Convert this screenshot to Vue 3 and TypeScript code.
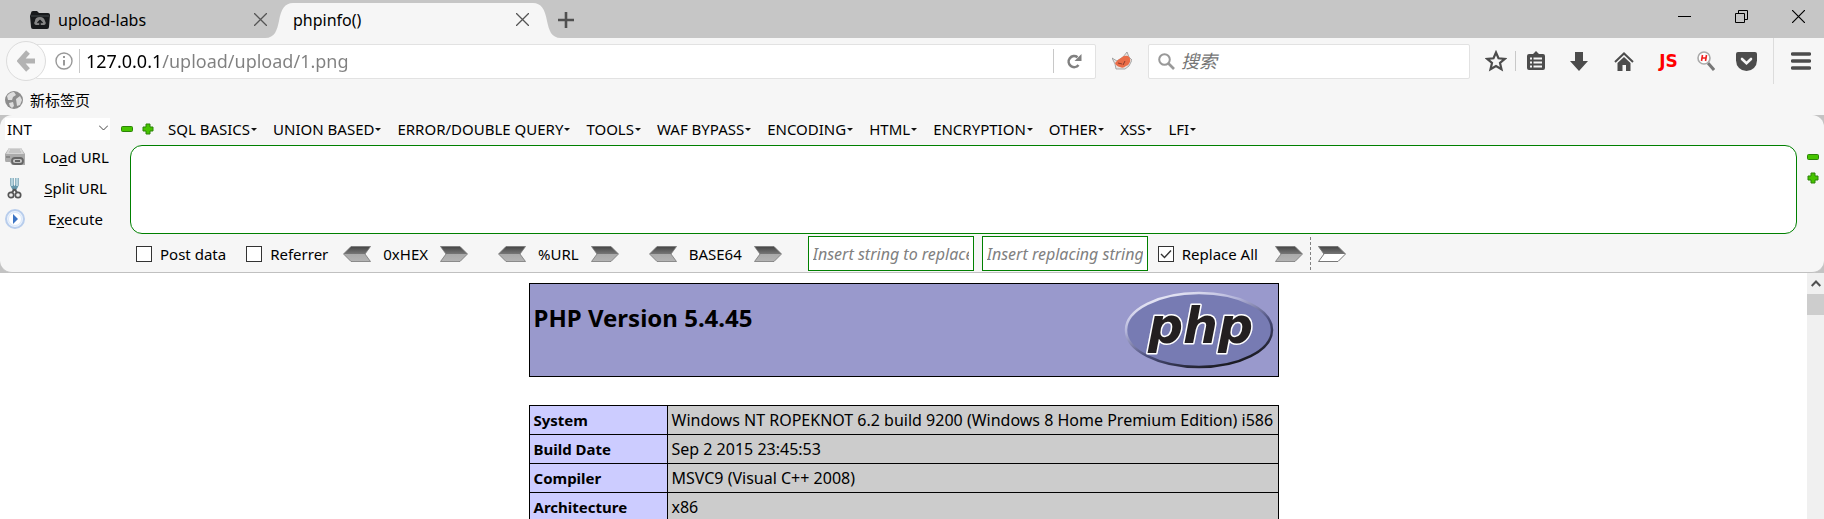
<script setup lang="ts">
import { ref } from 'vue'

const address = ref('127.0.0.1/upload/upload/1.png')
const query = ref('')
const kind = ref('INT')
const payload = ref('')
const postData = ref(false)
const referrer = ref(false)
const replaceAll = ref(true)
const needle = ref('')
const replacement = ref('')

const menus: string[] = [
  'SQL BASICS', 'UNION BASED', 'ERROR/DOUBLE QUERY', 'TOOLS', 'WAF BYPASS',
  'ENCODING', 'HTML', 'ENCRYPTION', 'OTHER', 'XSS', 'LFI',
]
const converters: string[] = ['0xHEX', '%URL', 'BASE64']
const rows: { name: string; value: string }[] = [
  { name: 'System', value: 'Windows NT ROPEKNOT 6.2 build 9200 (Windows 8 Home Premium Edition) i586' },
  { name: 'Build Date', value: 'Sep 2 2015 23:45:53' },
  { name: 'Compiler', value: 'MSVC9 (Visual C++ 2008)' },
  { name: 'Architecture', value: 'x86' },
]
</script>

<template>
  <div class="window">
    <svg class="defs" width="0" height="0" aria-hidden="true">
      <defs>
        <linearGradient id="steel" x1="0" y1="0" x2="0" y2="1">
          <stop offset="0" stop-color="#444" /><stop offset=".5" stop-color="#777" />
          <stop offset=".52" stop-color="#aaa" /><stop offset="1" stop-color="#b4b4b4" />
        </linearGradient>
        <linearGradient id="steelOpen" x1="0" y1="0" x2="0" y2="1">
          <stop offset="0" stop-color="#444" /><stop offset=".5" stop-color="#777" />
          <stop offset=".52" stop-color="#fff" /><stop offset="1" stop-color="#fff" />
        </linearGradient>
      </defs>
    </svg>

    <header class="tabs">
      <div class="tab idle">
        <svg width="20" height="18" viewBox="0 0 20 18"><path d="M1 2Q1 0 3 0H7L9 2H18Q20 2 20 4L19 16Q19 18 17 18H3Q1 18 1 16L0 5Z" fill="#17191b" /><path d="M1 5H19" stroke="#454a4d" /><path d="M6 14Q3 13 5 10Q5 6 10 6Q14 6 15 10Q17 13 14 14Z" fill="#858585" /><path d="M10 16V10M7.500 12L10 9.500L12.500 12" stroke="#17191b" stroke-width="1.500" fill="none" /></svg>
        <button class="tab-name">upload-labs</button>
        <button class="plain close" aria-label="Close upload-labs"><svg width="13" height="13" viewBox="0 0 13 13"><path d="M0 0L13 13M13 0L0 13" stroke="#555" stroke-width="1.300" /></svg></button>
      </div>
      <svg class="curve" width="28" height="35" viewBox="0 0 28 35"><path d="M0 35C10 35 12 27 14 18C16 6 20 0 28 0V35Z" fill="#f6f6f6" /></svg>
      <div class="tab active">
        <button class="tab-name">phpinfo()</button>
        <button class="plain close" aria-label="Close phpinfo()"><svg width="13" height="13" viewBox="0 0 13 13"><path d="M0 0L13 13M13 0L0 13" stroke="#555" stroke-width="1.300" /></svg></button>
      </div>
      <svg class="curve" width="28" height="35" viewBox="0 0 28 35"><path d="M28 35C18 35 16 27 14 18C12 6 8 0 0 0V35Z" fill="#f6f6f6" /></svg>
      <button class="plain new-tab" aria-label="New tab"><svg width="16" height="16" viewBox="0 0 16 16"><path d="M8 0V16M0 8H16" stroke="#505050" stroke-width="2.600" /></svg></button>
      <div class="sys">
        <button class="plain" aria-label="Minimize"><svg width="13" height="13" viewBox="0 0 13 13"><path d="M0 6.500H13" stroke="#000" /></svg></button>
        <button class="plain" aria-label="Restore"><svg width="13" height="13" viewBox="0 0 13 13"><path d="M.5 3.500H9.500V12.500H.5ZM3.500 3.500V.5H12.500V9.500H9.500" stroke="#000" fill="none" /></svg></button>
        <button class="plain" aria-label="Close window"><svg width="13" height="13" viewBox="0 0 13 13"><path d="M0 0L13 13M13 0L0 13" stroke="#000" stroke-width="1.200" /></svg></button>
      </div>
    </header>

    <nav class="toolbar">
      <button class="plain back" aria-label="Back"><svg width="18" height="22" viewBox="0 0 18 22"><path d="M11 2L3 11L11 20M3 11H18" fill="none" stroke="#b3b3b3" stroke-width="5" /></svg></button>
      <div class="address">
        <svg width="18" height="18" viewBox="0 0 18 18"><circle cx="9" cy="9" r="8" fill="none" stroke="#999" stroke-width="1.400" /><path d="M9 8V13.500M9 4V6" stroke="#999" stroke-width="2" /></svg>
        <i class="rule"></i>
        <input v-model="address" class="url" type="text" aria-label="Address" />
        <i class="rule"></i>
        <button class="plain reload" aria-label="Reload"><svg width="15" height="15" viewBox="0 0 15 15"><path d="M11.500 11A5.500 5.500 0 1 1 10.500 3.200" fill="none" stroke="#808080" stroke-width="2.600" /><path d="M14.500 0V7H7.500Z" fill="#808080" /></svg></button>
      </div>
      <button class="plain fox" aria-label="Fox"><svg width="20" height="18" viewBox="0 0 20 18"><path d="M0 6L5 9L11 5L15 0L17 5L20 8L17 14L13 17H4L3 12Z" fill="#e8e4e2" stroke="#888" stroke-width=".7" /><path d="M3 11Q5 8 9 6Q12 3 16 4Q19 6 18 10Q17 13 14 14Q11 17 8 15Q4 14 3 11Z" fill="#ea6d48" /><path d="M6 11L10 12M13 9L11 13" stroke="#8b3d2d" /></svg></button>
      <div class="search">
        <svg width="17" height="17" viewBox="0 0 17 17"><circle cx="6.500" cy="6.500" r="5.300" fill="none" stroke="#999" stroke-width="2" /><path d="M10.500 10.500L16 16" stroke="#999" stroke-width="2.600" /></svg>
        <input v-model="query" type="text" placeholder="搜索" aria-label="搜索" />
      </div>
      <div class="tools">
        <button class="plain w-star" aria-label="Bookmark"><svg width="22" height="22" viewBox="0 0 22 22"><path d="M11 2.500L13.500 8.300L19.800 8.900L15 13L16.500 19.300L11 16L5.500 19.300L7 13L2.200 8.900L8.500 8.300Z" fill="none" stroke="#4c4c4c" stroke-width="2.200" /></svg></button>
        <i class="rule short"></i>
        <button class="plain w-list" aria-label="Bookmarks list"><svg width="18" height="20" viewBox="0 0 18 20"><path d="M6 3L9 0L12 3H16Q18 3 18 5V17Q18 19 16 19H2Q0 19 0 17V5Q0 3 2 3Z" fill="#4c4c4c" /><path d="M3 7.500H5M6.500 7.500H15M3 11.500H5M6.500 11.500H15M3 15.500H5M6.500 15.500H15" stroke="#f6f6f6" stroke-width="2" /></svg></button>
        <button class="plain w-tool" aria-label="Downloads"><svg width="18" height="19" viewBox="0 0 18 19"><path d="M5 0H13V9H18L9 19L0 9H5Z" fill="#4c4c4c" /></svg></button>
        <button class="plain w-tool" aria-label="Home"><svg width="20" height="19" viewBox="0 0 20 19"><path d="M1 10L10 1.500L19 10" fill="none" stroke="#4c4c4c" stroke-width="2" /><path d="M3.500 11L10 5L16.500 11V19H12V13H8.500V19H3.500Z" fill="#4c4c4c" /></svg></button>
        <button class="plain w-tool js" aria-label="Toggle script">JS</button>
        <button class="plain w-find" aria-label="HackSearch"><svg width="18" height="20" viewBox="0 0 18 20"><path d="M11 12L17 19" stroke="#777" stroke-width="3" /><circle cx="7" cy="7" r="6" fill="#fff" stroke="#aaa" stroke-width="1.600" /><path d="M5.500 4L4.500 10M9.500 4L8.500 10M5 7H9" stroke="#f02020" stroke-width="1.600" /></svg></button>
        <button class="plain w-pocket" aria-label="Pocket"><svg width="21" height="19" viewBox="0 0 21 19"><path d="M2 0H19Q21 0 21 2V8.500A10.500 10.500 0 0 1 0 8.500V2Q0 0 2 0Z" fill="#4c4c4c" /><path d="M6 7L10.500 11.200L15 7" fill="none" stroke="#f6f6f6" stroke-width="2.600" stroke-linecap="round" /></svg></button>
        <i class="rule tall"></i>
        <button class="plain w-menu" aria-label="Menu"><svg width="20" height="18" viewBox="0 0 20 18"><path d="M1.500 2H18.500M1.500 9H18.500M1.500 16H18.500" stroke="#4c4c4c" stroke-width="3.400" stroke-linecap="round" /></svg></button>
      </div>
    </nav>

    <div class="bookmarks">
      <a href="#"><svg width="18" height="18" viewBox="0 0 18 18"><circle cx="9" cy="9" r="9" fill="#8d8d8d" /><path d="M2 5Q5 1 9 1L11 4L8 6L7 9L3 9ZM11 8L15 5L17 9L15 14L12 15ZM4 12L8 11L9 15L7 17Q4 15 4 12Z" fill="#ddd" /></svg><span>新标签页</span></a>
    </div>

    <div class="bar-back">
      <section class="hackbar">
        <div class="menus">
          <div class="pick">
            <select v-model="kind" aria-label="Injection type"><option>INT</option></select>
            <svg width="9" height="6" viewBox="0 0 9 6"><path d="M0 .5L4.500 5L9 .5" fill="none" stroke="#444" /></svg>
          </div>
          <button class="plain step" aria-label="Decrease"><svg width="12" height="12" viewBox="0 0 12 12"><rect x=".5" y="3.500" width="11" height="5" rx="1" fill="#46c400" stroke="#2c8308" /></svg></button>
          <button class="plain step" aria-label="Increase"><svg width="12" height="12" viewBox="0 0 12 12"><path d="M4 1H8V4H11V8H8V11H4V8H1V4H4Z" fill="#46c400" stroke="#2c8308" stroke-linejoin="round" /></svg></button>
          <div class="menu-list">
            <button v-for="m in menus" :key="m" class="plain menu">{{ m }}<svg width="6" height="3" viewBox="0 0 6 3"><path d="M0 0H6L3 3Z" fill="#111" /></svg></button>
          </div>
        </div>
        <div class="work">
          <div class="actions">
            <button class="plain"><svg width="20" height="20" viewBox="0 0 20 20"><path d="M4 1H16L20 7V18H7L5 15H1Q0 15 0 13V7Z" fill="#aaa" /><path d="M4 1H16L19 7H1Z" fill="#d6d6d6" /><path d="M5 3H15M4 5H16" stroke="#b4b4b4" /><path d="M1 10H5" stroke="#888" stroke-width="2" /><rect x="7" y="11" width="11" height="6" rx="3" fill="#c4c4c4" stroke="#666" stroke-width="1.800" /><path d="M10 14H15" stroke="#444" stroke-width="1.500" /></svg><span>Lo<u>a</u>d URL</span></button>
            <button class="plain"><svg width="20" height="22" viewBox="0 0 20 22"><path d="M7 1V8L9.500 13M12 1V8L9.500 13" fill="none" stroke="#6798ac" stroke-width="3.400" /><path d="M7 1V9M12 1V9" stroke="#d7edf4" stroke-width="1.400" /><path d="M9.500 12L6 17M9.500 12L13 17" stroke="#555" stroke-width="2" /><circle cx="6" cy="18" r="2.700" fill="#eee" stroke="#555" stroke-width="1.700" /><circle cx="13" cy="18" r="2.700" fill="#eee" stroke="#555" stroke-width="1.700" /></svg><span><u>S</u>plit URL</span></button>
            <button class="plain"><svg width="20" height="20" viewBox="0 0 20 20"><circle cx="10" cy="10" r="9" fill="#e9f1fc" stroke="#b8cdec" stroke-width="2" /><circle cx="10" cy="10" r="6.500" fill="#fff" stroke="#dce8f8" /><path d="M8 5L13 10L8 15Z" fill="#3c74c4" /></svg><span>E<u>x</u>ecute</span></button>
          </div>
          <div class="main">
            <textarea v-model="payload" aria-label="URL to edit"></textarea>
            <div class="options">
              <div class="checks">
                <label class="check"><input v-model="postData" type="checkbox" />Post data</label>
                <label class="check"><input v-model="referrer" type="checkbox" />Referrer</label>
              </div>
              <div v-for="c in converters" :key="c" class="convert">
                <button class="plain" :aria-label="'Decode ' + c"><svg width="28" height="16" viewBox="0 0 28 16"><path d="M8 .5H27.500L22 8L27.500 15.500H8L.5 8Z" fill="url(#steel)" stroke="#777" stroke-width=".8" /></svg></button>
                <span>{{ c }}</span>
                <button class="plain" :aria-label="'Encode ' + c"><svg width="28" height="16" viewBox="0 0 28 16"><path d="M20 .5H.5L6 8L.5 15.500H20L27.500 8Z" fill="url(#steel)" stroke="#777" stroke-width=".8" /></svg></button>
              </div>
              <div class="replace">
                <input v-model="needle" type="text" placeholder="Insert string to replace" aria-label="String to replace" />
                <input v-model="replacement" type="text" placeholder="Insert replacing string" aria-label="Replacing string" />
              </div>
              <label class="check all"><input v-model="replaceAll" type="checkbox" />Replace All</label>
              <div class="run">
                <button class="plain" aria-label="Replace"><svg width="28" height="16" viewBox="0 0 28 16"><path d="M20 .5H.5L6 8L.5 15.500H20L27.500 8Z" fill="url(#steel)" stroke="#777" stroke-width=".8" /></svg></button>
                <i class="dash"></i>
                <button class="plain" aria-label="Replace and run"><svg width="28" height="16" viewBox="0 0 28 16"><path d="M20 .5H.5L6 8L.5 15.500H20L27.500 8Z" fill="url(#steelOpen)" stroke="#777" /></svg></button>
              </div>
            </div>
          </div>
          <div class="sizer">
            <button class="plain step" aria-label="Shrink field"><svg width="12" height="12" viewBox="0 0 12 12"><rect x=".5" y="3.500" width="11" height="5" rx="1" fill="#46c400" stroke="#2c8308" /></svg></button>
            <button class="plain step" aria-label="Grow field"><svg width="12" height="12" viewBox="0 0 12 12"><path d="M4 1H8V4H11V8H8V11H4V8H1V4H4Z" fill="#46c400" stroke="#2c8308" stroke-linejoin="round" /></svg></button>
          </div>
        </div>
      </section>
    </div>

    <div class="viewport">
      <main class="page">
        <div class="banner">
          <h1>PHP Version 5.4.45</h1>
          <svg width="150" height="80" viewBox="0 0 150 80" role="img" aria-label="php">
            <defs>
              <linearGradient id="rim" x1=".2" y1="0" x2=".8" y2="1">
                <stop offset="0" stop-color="#f0f0fa" /><stop offset=".3" stop-color="#b4b5da" />
                <stop offset=".6" stop-color="#4b4e7c" /><stop offset="1" stop-color="#111" />
              </linearGradient>
            </defs>
            <ellipse cx="75" cy="40" rx="73" ry="37" fill="#777bb3" stroke="url(#rim)" stroke-width="2.500" />
            <text x="24" y="53" class="logo">php</text>
          </svg>
        </div>
        <table class="info">
          <tbody>
            <tr v-for="r in rows" :key="r.name"><th scope="row">{{ r.name }}</th><td>{{ r.value }}</td></tr>
          </tbody>
        </table>
      </main>
      <div class="scroll">
        <button class="plain" aria-label="Scroll up"><svg width="10" height="7" viewBox="0 0 10 7"><path d="M.7 6L5 1.500L9.300 6" fill="none" stroke="#505050" stroke-width="2" /></svg></button>
        <div class="thumb"></div>
      </div>
    </div>
  </div>
</template>

<style>
body { margin: 0; }
#app { height: 100vh; overflow: hidden; }
</style>

<style scoped>
* { box-sizing: border-box; }
.window { height: 100%; display: flex; flex-direction: column; background: #fff; color: #000; font: 15px/20px "Noto Sans", "Noto Sans CJK SC", sans-serif; }
.defs { position: absolute; }
svg { display: block; flex: none; }
button, input, select, textarea { font: inherit; color: inherit; margin: 0; }
.plain, .tab-name { border: 0; background: none; padding: 0; display: flex; align-items: center; justify-content: center; white-space: nowrap; }
.rule { flex: none; width: 1px; height: 24px; background: #c8c8c8; }
.rule.short { height: 20px; }
.rule.tall { height: 46px; background: #dcdcdc; }

.tabs { flex: none; height: 38px; background: #c6c6c6; display: flex; align-items: flex-end; }
.tab { height: 35px; display: flex; align-items: center; padding-bottom: 2px; font-size: 16px; }
.tab.idle { width: 265px; padding-left: 30px; gap: 8px; }
.tab.active { width: 240px; background: #f6f6f6; }
.close { margin-left: auto; width: 13px; }
.tab.idle .close { margin-right: -2px; }
.tab.active .close { margin-right: 4px; }
.new-tab { height: 35px; margin-left: -3px; padding-bottom: 2px; }
.sys { margin-left: auto; height: 35px; display: flex; gap: 44px; align-items: center; padding: 0 19px 8px 0; }

.toolbar { flex: none; height: 46px; background: #f6f6f6; display: flex; align-items: center; }
.back { z-index: 1; flex: none; width: 40px; height: 40px; margin-left: 6px; border: 1px solid #dcdcdc; border-radius: 50%; background: #f9f9f9; }
.address { flex: 1; min-width: 0; height: 35px; margin-left: -10px; padding-left: 18px; border: 1px solid #e2e2e2; border-radius: 0 2px 2px 0; background: #fff; display: flex; align-items: center; }
.address > .rule:first-of-type { margin-left: 6px; }
.url { flex: 1; min-width: 0; border: 0; outline: 0; padding: 0 0 0 6px; font-size: 18px; line-height: 24px; background: linear-gradient(to right, #000 81px, #808080 81px); -webkit-background-clip: text; background-clip: text; color: transparent; }
.reload { width: 41px; }
.fox { width: 52px; }
.search { flex: none; width: 322px; height: 35px; padding: 0 9px; border: 1px solid #e2e2e2; border-radius: 2px; background: #fff; display: flex; align-items: center; gap: 6px; }
.search input { flex: 1; min-width: 0; border: 0; outline: 0; padding: 0; font-size: 18px; font-style: italic; background: none; }
.search input::placeholder { color: #757575; opacity: 1; }
.tools { flex: none; display: flex; align-items: center; }
.w-star { width: 45px; padding-left: 7px; }
.w-list { width: 40px; }
.w-tool { width: 45px; }
.js { font-family: "DejaVu Sans", sans-serif; font-size: 17px; font-weight: 700; color: #f00; }
.w-find { width: 29px; }
.w-pocket { width: 53px; }
.w-menu { width: 50px; padding-left: 3px; }

.bookmarks { flex: none; height: 31px; background: #f6f6f6; display: flex; align-items: center; padding-left: 5px; }
.bookmarks a { display: flex; align-items: center; gap: 7px; color: #000; text-decoration: none; }

.bar-back { flex: none; background: #c3c3c3; }
.hackbar { background: #f6f6f6; border-bottom: 1px solid #c0c0c0; border-radius: 12px; overflow: hidden; }
.menus { height: 26px; display: flex; align-items: center; padding: 2px 0 0 5px; }
.pick { position: relative; width: 105px; height: 22px; margin-right: 11px; }
.pick select { width: 100%; height: 100%; appearance: none; border: 0; border-radius: 0; background: #fff; padding: 0 0 0 2px; }
.pick svg { position: absolute; right: 2px; top: 7px; pointer-events: none; }
.step { width: 12px; height: 21px; }
.step + .step { margin-left: 9px; }
.menu-list { display: flex; gap: 16px; margin-left: 14px; }
.menu svg { margin-left: 1px; }
.work { display: flex; }
.actions { width: 130px; display: flex; flex-direction: column; }
.actions .plain { height: 31px; justify-content: flex-start; padding-left: 5px; }
.actions span { width: 101px; text-align: center; }
u { text-underline-offset: 2px; }
.main { flex: 1; min-width: 0; padding-top: 4px; }
textarea { display: block; width: 100%; height: 89px; resize: none; border: 1px solid #008000; border-radius: 12px; background: #fff; outline: 0; padding: 8px; }
.options { display: flex; align-items: center; height: 38px; padding: 1px 0 0 6px; }
.checks { display: flex; gap: 20px; margin-right: 15px; }
.check { display: flex; align-items: center; gap: 8px; white-space: nowrap; }
.check input { appearance: none; flex: none; width: 16px; height: 16px; border: 1px solid #333; background: #fff; }
.check input:checked { background: #fff url("data:image/svg+xml,%3Csvg xmlns='http://www.w3.org/2000/svg' viewBox='0 0 14 14'%3E%3Cpath d='M2 7L5.500 10.500L12 3.500' fill='none' stroke='%23333' stroke-width='1.400'/%3E%3C/svg%3E"); }
.convert { display: flex; align-items: center; gap: 12px; margin-right: 30px; }
.replace { display: flex; gap: 8px; margin: 0 10px 0 -4px; }
.replace input { width: 166px; height: 35px; border: 1px solid #008000; background: #fff; padding: 0 4px; font-size: 16px; font-style: italic; outline: 0; }
.replace input::placeholder { color: #808080; opacity: 1; }
.check.all { margin-right: 17px; }
.run { display: flex; align-items: center; gap: 7px; }
.dash { width: 0; height: 33px; border-left: 1px dashed #808080; }
.sizer { width: 27px; display: flex; flex-direction: column; align-items: center; padding: 5px 0 0 5px; }
.sizer .step + .step { margin-left: 0; }

.viewport { flex: 1; min-height: 0; display: flex; }
.page { flex: 1; min-width: 0; overflow: hidden; padding-top: 10px; }
.banner, .info { width: 750px; margin: 0 auto; }
.banner { height: 94px; border: 1px solid #000; background: #9999cc; padding: 0 4px; display: flex; justify-content: space-between; }
h1 { margin: 17px 0 0; font-size: 24px; line-height: 34px; font-weight: 700; }
.banner svg { margin-top: 6px; }
.logo { font: italic bold 49px "DejaVu Sans", sans-serif; fill: #231f20; stroke: #fff; stroke-width: 3px; stroke-linejoin: round; paint-order: stroke; }
.info { margin-top: 28px; border-collapse: collapse; }
.info th, .info td { border: 1px solid #000; padding: 4px; height: 29px; text-align: left; }
.info th { width: 138px; background: #ccccff; font-weight: 700; }
.info td { background: #cccccc; font-size: 16px; }
.scroll { flex: none; width: 17px; background: #f0f0f0; }
.scroll .plain { width: 17px; height: 21px; }
.thumb { height: 21px; background: #cdcdcd; }
</style>
